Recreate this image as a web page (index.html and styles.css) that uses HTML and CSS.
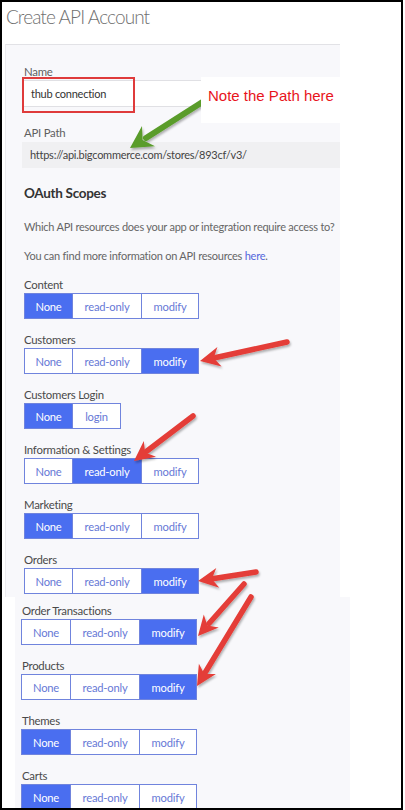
FILE: index.html
```html
<!DOCTYPE html>
<html>

   <head>
      <title>Create API Account</title>
      <meta charset="utf-8">
      <meta name="viewport" content="width=device-width, initial-scale=1.0">
      <link rel="stylesheet" href="styles.css">
   </head>

   <body>
      <div class="frame">
         <h1 class="page-title">Create API Account</h1>

         <div class="panel">
            <div class="field-label">Name</div>
            <div class="text-input">thub connection</div>

            <div class="field-label path-label">API Path</div>
            <div class="path-box">https://api.bigcommerce.com/stores/893cf/v3/</div>

            <h2 class="section-title">OAuth Scopes</h2>
            <p class="intro">Which API resources does your app or integration require access to?</p>
            <p class="intro more">You can find more information on API resources <a href="#">here</a>.</p>

            <div class="scope">
               <div class="scope-label">Content</div>
               <div class="btn-group">
                  <span class="seg seg-none active">None</span><span class="seg seg-read">read-only</span><span class="seg seg-mod">modify</span>
               </div>
            </div>
            <div class="scope">
               <div class="scope-label">Customers</div>
               <div class="btn-group">
                  <span class="seg seg-none">None</span><span class="seg seg-read">read-only</span><span class="seg seg-mod active">modify</span>
               </div>
            </div>
            <div class="scope">
               <div class="scope-label">Customers Login</div>
               <div class="btn-group">
                  <span class="seg seg-none active">None</span><span class="seg seg-login">login</span>
               </div>
            </div>
            <div class="scope">
               <div class="scope-label">Information &amp; Settings</div>
               <div class="btn-group">
                  <span class="seg seg-none">None</span><span class="seg seg-read active">read-only</span><span class="seg seg-mod">modify</span>
               </div>
            </div>
            <div class="scope">
               <div class="scope-label">Marketing</div>
               <div class="btn-group">
                  <span class="seg seg-none active">None</span><span class="seg seg-read">read-only</span><span class="seg seg-mod">modify</span>
               </div>
            </div>
            <div class="scope last">
               <div class="scope-label">Orders</div>
               <div class="btn-group">
                  <span class="seg seg-none">None</span><span class="seg seg-read">read-only</span><span class="seg seg-mod active">modify</span>
               </div>
            </div>
         </div>

         <!-- second screenshot pasted below the first one -->
         <div class="panel-lower">
            <div class="scope">
               <div class="scope-label">Order Transactions</div>
               <div class="btn-group">
                  <span class="seg seg-none">None</span><span class="seg seg-read">read-only</span><span class="seg seg-mod active">modify</span>
               </div>
            </div>
            <div class="scope">
               <div class="scope-label">Products</div>
               <div class="btn-group">
                  <span class="seg seg-none">None</span><span class="seg seg-read">read-only</span><span class="seg seg-mod active">modify</span>
               </div>
            </div>
            <div class="scope">
               <div class="scope-label">Themes</div>
               <div class="btn-group">
                  <span class="seg seg-none active">None</span><span class="seg seg-read">read-only</span><span class="seg seg-mod">modify</span>
               </div>
            </div>
            <div class="scope">
               <div class="scope-label">Carts</div>
               <div class="btn-group">
                  <span class="seg seg-none active">None</span><span class="seg seg-read">read-only</span><span class="seg seg-mod">modify</span>
               </div>
            </div>
         </div>

         <!-- annotations drawn over the screenshot -->
         <div class="red-box"></div>

         <svg class="arrows" width="405" height="810" viewBox="0 0 405 810">
            <defs>
               <filter id="shadow" x="-20%" y="-20%" width="140%" height="140%">
                  <feDropShadow dx="1" dy="2" stdDeviation="1.2" flood-color="#000" flood-opacity="0.3"/>
               </filter>
            </defs>
            <g filter="url(#shadow)">
               <line x1="215" y1="94" x2="146" y2="138" stroke="#5a9c2c" stroke-width="6" stroke-linecap="round"/>
               <polygon points="130,148 142,126 142.6,139.9 155,146.2" fill="#5a9c2c"/>
            </g>
            <g filter="url(#shadow)" fill="#e43d37" stroke="#e43d37" stroke-width="5.5" stroke-linecap="round">
               <line x1="287" y1="342" x2="216" y2="357.5"/>
               <polygon stroke="none" points="200,361 217.4,346.9 213.7,358 221.6,366.5"/>

               <line x1="193" y1="416" x2="147" y2="451"/>
               <polygon stroke="none" points="134,461 143.8,441 145.1,452.5 156,456.8"/>

               <line x1="256" y1="572" x2="214" y2="578.5"/>
               <polygon stroke="none" points="198,581 216.3,568 211.8,578.9 219.3,587.8"/>

               <line x1="244" y1="584" x2="209" y2="623.5"/>
               <polygon stroke="none" points="198,636 203.8,614.4 207.3,625.5 218.8,627.6"/>

               <line x1="251" y1="597" x2="205.5" y2="672"/>
               <polygon stroke="none" points="197,686 198.9,663.7 204.3,674 215.9,674.1"/>
            </g>
         </svg>

         <div class="note">Note the Path here</div>
      </div>
   </body>

</html>
```

FILE: styles.css
```css
body {
   margin: 0;
   background-color: #ffffff;
   font-family: Lato, "Open Sans", sans-serif;
}

.frame {
   position: relative;
   width: 403px;
   height: 810px;
   box-sizing: border-box;
   border: 2px solid #000000;
   overflow: hidden;
   background-color: #ffffff;
}

.page-title {
   margin: 0;
   padding-left: 4px;
   height: 42px;
   font-size: 19px;
   font-weight: 300;
   letter-spacing: -0.9px;
   line-height: 30px;
   color: #707070;
}

/* upper screenshot */
.panel {
   margin-left: 3px;
   width: 335px;
   padding: 19px 0 3px 18px;
   box-sizing: border-box;
   background-color: #f8f8fb;
   border-top: 1px solid #e2e2e6;
   border-left: 1px solid #ebebef;
}

.field-label {
   font-size: 11.4px;
   letter-spacing: -0.25px;
   line-height: 16px;
   color: #5f5f5f;
}

.text-input {
   margin-left: -2px;
   width: 318px;
   height: 27px;
   box-sizing: border-box;
   padding-left: 8px;
   background-color: #ffffff;
   border: 1px solid #e0e0e4;
   font-size: 11px;
   letter-spacing: -0.25px;
   line-height: 25px;
   color: #333333;
}

.path-label {
   margin-top: 18px;
   margin-bottom: 1px;
}

.path-box {
   margin-left: -2px;
   width: 318px;
   height: 26px;
   box-sizing: border-box;
   padding-left: 8px;
   background-color: #f0f0f2;
   font-size: 11px;
   letter-spacing: -0.25px;
   line-height: 26px;
   color: #444444;
}

.section-title {
   margin: 15px 0 0 0;
   font-size: 13.5px;
   font-weight: 700;
   letter-spacing: -0.3px;
   line-height: 20px;
   color: #333333;
}

.intro {
   margin: 16px 0 0 0;
   font-size: 11px;
   line-height: 16px;
   letter-spacing: -0.25px;
   white-space: nowrap;
   color: #666666;
}

.intro.more {
   margin-top: 13px;
   margin-bottom: 13px;
}

.intro a {
   color: #5467dc;
   text-decoration: none;
}

.scope {
   margin-bottom: 13px;
}

.scope.last {
   margin-bottom: 0;
}

.scope-label {
   font-size: 11.4px;
   letter-spacing: -0.25px;
   line-height: 16px;
   color: #4a4a4a;
}

.btn-group {
   display: inline-flex;
   height: 26px;
   box-sizing: border-box;
   border: 1px solid #7084dd;
   background-color: #ffffff;
}

.seg {
   display: flex;
   align-items: center;
   justify-content: center;
   font-size: 11.2px;
   letter-spacing: -0.2px;
   color: #6779d6;
   border-left: 1px solid #7084dd;
}

.seg:first-child {
   border-left: none;
}

.seg.active {
   background-color: #4a6ef0;
   color: #ffffff;
}

.seg-none {
   width: 47px;
}

.seg-read {
   width: 68px;
}

.seg-mod {
   width: 56px;
}

.seg-login {
   width: 47px;
}

/* lower screenshot, pasted a little to the left */
.panel-lower {
   margin-left: 13px;
   width: 335px;
   padding: 6px 0 0 7px;
   box-sizing: border-box;
   background-color: #f8f8fb;
}

.panel-lower .btn-group {
   margin-left: -1px;
}

.panel-lower .seg-none {
   width: 48px;
}

/* annotations */
.red-box {
   position: absolute;
   left: 20px;
   top: 75px;
   width: 109px;
   height: 32px;
   border: 2px solid #df3b3b;
}

.arrows {
   position: absolute;
   left: -2px;
   top: -2px;
}

.note {
   position: absolute;
   left: 199px;
   top: 75px;
   width: 146px;
   height: 46px;
   padding: 10px 0 0 7px;
   box-sizing: border-box;
   background-color: #ffffff;
   font-family: "Liberation Sans", Arial, sans-serif;
   font-size: 15px;
   line-height: 18px;
   color: #e8141c;
}
```
